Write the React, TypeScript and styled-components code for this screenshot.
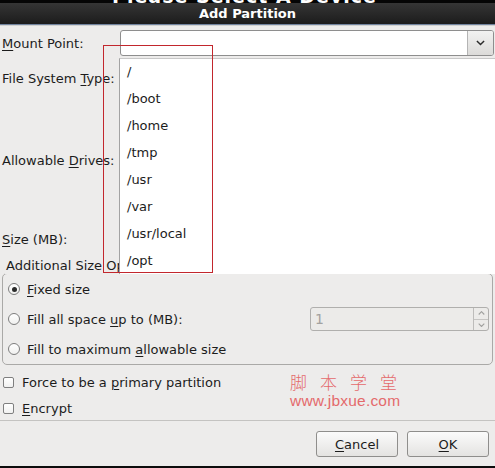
import React from "react";
import styled, { createGlobalStyle } from "styled-components";

const GlobalStyle = createGlobalStyle`
  html, body {
    margin: 0;
    padding: 0;
    background: #edeceb;
  }
  body {
    font-family: "DejaVu Sans", "Noto Sans", sans-serif;
    font-size: 13px;
    color: #1c1c1c;
  }
`;

const Window = styled.div`
  position: relative;
  width: 495px;
  height: 468px;
  overflow: hidden;
  display: flex;
  flex-direction: column;
  background: #edeceb;
  & > * {
    flex-shrink: 0;
  }
`;

const TopStrip = styled.div`
  height: 3px;
  overflow: hidden;
  background: #050505;
  display: flex;
  justify-content: center;
`;

const BehindText = styled.span`
  margin-top: -12px;
  font-size: 19px;
  font-weight: bold;
  line-height: 17px;
  color: #fff;
  letter-spacing: 1px;
  padding-right: 6px;
`;

const TitleBar = styled.div`
  height: 21px;
  display: flex;
  align-items: center;
  justify-content: center;
  background: linear-gradient(#353535, #262626 60%, #1c1c1c);
  color: #fff;
  font-weight: bold;
  font-size: 13px;
  border-bottom: 1px solid #71839e;
  box-shadow: 0 1px 0 #d0d0cf;
  margin-bottom: 1px;
`;

const Body = styled.div`
  height: 394px;
  display: flex;
  flex-direction: column;
  padding-top: 2px;
  box-sizing: border-box;
`;

const FormGrid = styled.div`
  display: grid;
  grid-template-columns: 120px 1fr;
  grid-template-rows: 30px 40px 124px 34px;
  padding-right: 1px;
  padding-bottom: 16px;
`;

const Label = styled.div`
  display: flex;
  align-items: center;
  padding-left: 2px;
  white-space: nowrap;
`;

const Mn = styled.u`
  text-decoration-thickness: 1px;
  text-underline-offset: 2px;
`;

const Combo = styled.div`
  margin-top: 2px;
  height: 26px;
  box-sizing: border-box;
  display: flex;
  border: 1px solid #8e8e8e;
  border-radius: 3px;
  background: #fff;
  overflow: hidden;
`;

const ComboEntry = styled.div`
  flex: 1;
`;

const ComboButton = styled.div`
  width: 25px;
  display: flex;
  align-items: center;
  justify-content: center;
  border-left: 1px solid #b4b4b4;
  background: linear-gradient(#f2f2f1, #dcdbd9);
`;

const SizeFrame = styled.fieldset`
  margin: 0 2px 0 2px;
  padding: 0;
  border: 1px solid #aaa9a7;
  border-radius: 5px;
  min-width: 0;
`;

const Legend = styled.legend`
  margin-left: 2px;
  padding: 0 1px;
  line-height: 2px;
  position: relative;
  top: -7px;
`;

const OptionRow = styled.div`
  height: 30px;
  display: flex;
  align-items: center;
  padding-left: 5px;
  padding-right: 3px;
`;

const Radio = styled.span<{ $checked?: boolean }>`
  width: 12px;
  height: 12px;
  box-sizing: border-box;
  border-radius: 50%;
  border: 1px solid #7d7d7d;
  background: linear-gradient(#ffffff, #f0f0ef);
  margin-right: 7px;
  display: flex;
  align-items: center;
  justify-content: center;
  &::after {
    content: "";
    display: ${(p) => (p.$checked ? "block" : "none")};
    width: 5px;
    height: 5px;
    border-radius: 50%;
    background: #2a2a2a;
  }
`;

const Grow = styled.div`
  flex: 1;
`;

const SpinBox = styled.div`
  width: 179px;
  height: 24px;
  box-sizing: border-box;
  display: flex;
  border: 1px solid #b0afad;
  border-radius: 3px;
  background: #ecebe9;
  color: #a3a2a0;
  font-size: 14px;
`;

const SpinValue = styled.div`
  flex: 1;
  display: flex;
  align-items: center;
  padding-left: 4px;
`;

const SpinButtons = styled.div`
  width: 14px;
  display: flex;
  flex-direction: column;
  border-left: 1px solid #bdbcba;
`;

const SpinStep = styled.div<{ $first?: boolean }>`
  flex: 1;
  display: flex;
  align-items: center;
  justify-content: center;
  border-bottom: ${(p) => (p.$first ? "1px solid #c6c5c3" : "none")};
`;

const CheckList = styled.div`
  display: flex;
  flex-direction: column;
  margin-top: 4px;
`;

const CheckRow = styled.div`
  height: 26px;
  display: flex;
  align-items: center;
  padding-left: 3px;
`;

const Box = styled.span`
  width: 11px;
  height: 11px;
  box-sizing: border-box;
  border: 1px solid #7f7f7f;
  border-radius: 2px;
  background: linear-gradient(#ffffff, #f1f1f0);
  margin-right: 8px;
`;

const Separator = styled.div`
  height: 1px;
  background: #c4c3c1;
`;

const Footer = styled.div`
  height: 45px;
  display: flex;
  align-items: center;
  justify-content: flex-end;
  gap: 9px;
  padding-right: 6px;
  box-sizing: border-box;
`;

const Button = styled.div`
  width: 82px;
  height: 26px;
  box-sizing: border-box;
  display: flex;
  align-items: center;
  justify-content: center;
  border: 1px solid #8f8e8c;
  border-radius: 3px;
  background: linear-gradient(#fbfbfb, #e4e3e1);
  margin-top: 1px;
`;

const BottomEdge = styled.div`
  height: 2px;
  background: #0c0c0c;
`;

const DropList = styled.ul`
  position: absolute;
  left: 119px;
  top: 58px;
  right: 0;
  height: 216px;
  margin: 0;
  padding: 0;
  list-style: none;
  background: #fff;
  border-left: 1px solid #a3a3a3;
  border-top: 1px solid #c8c8c8;
  box-sizing: border-box;
`;

const DropItem = styled.li`
  height: 27px;
  display: flex;
  align-items: center;
  padding-left: 7px;
  padding-bottom: 2px;
  box-sizing: border-box;
  font-size: 13px;
`;

const Annotation = styled.div`
  position: absolute;
  left: 103px;
  top: 45px;
  width: 110px;
  height: 228px;
  border: 1px solid #c2272d;
  box-sizing: border-box;
  pointer-events: none;
`;

const Watermark = styled.div`
  position: absolute;
  left: 290px;
  top: 372px;
  color: #e46a6c;
  display: flex;
  flex-direction: column;
  align-items: flex-start;
`;

const WatermarkCn = styled.span`
  font-family: "Noto Sans CJK SC", sans-serif;
  font-size: 17px;
  line-height: 20px;
  letter-spacing: 13px;
  font-weight: 300;
`;

const WatermarkUrl = styled.span`
  font-family: "Liberation Sans", Arial, sans-serif;
  font-size: 15.5px;
  line-height: 15px;
  margin-top: 1px;
  letter-spacing: 0.2px;
`;

const mountPoints = [
  "/",
  "/boot",
  "/home",
  "/tmp",
  "/usr",
  "/var",
  "/usr/local",
  "/opt",
];

const Chevron = ({ up, size = 9, color = "#2b2b2b" }: { up?: boolean; size?: number; color?: string }) => (
  <svg width={size} height={size * 0.6} viewBox="0 0 10 6">
    <path
      d={up ? "M1 5 L5 1 L9 5" : "M1 1 L5 5 L9 1"}
      fill="none"
      stroke={color}
      strokeWidth={1.6}
    />
  </svg>
);

export default function App() {
  return (
    <>
      <GlobalStyle />
      <Window>
        <TopStrip>
          <BehindText>Please Select A Device</BehindText>
        </TopStrip>
        <TitleBar>Add Partition</TitleBar>
        <Body>
          <FormGrid>
            <Label>
              <span>
                <Mn>M</Mn>ount Point:
              </span>
            </Label>
            <Combo>
              <ComboEntry />
              <ComboButton>
                <Chevron />
              </ComboButton>
            </Combo>
            <Label>
              <span>
                File System <Mn>T</Mn>ype:
              </span>
            </Label>
            <div />
            <Label>
              <span>
                Allowable <Mn>D</Mn>rives:
              </span>
            </Label>
            <div />
            <Label>
              <span>
                <Mn>S</Mn>ize (MB):
              </span>
            </Label>
            <div />
          </FormGrid>

          <SizeFrame>
            <Legend>Additional Size Options</Legend>
            <OptionRow>
              <Radio $checked />
              <span>
                <Mn>F</Mn>ixed size
              </span>
            </OptionRow>
            <OptionRow>
              <Radio />
              <span>
                Fill all space <Mn>u</Mn>p to (MB):
              </span>
              <Grow />
              <SpinBox>
                <SpinValue>1</SpinValue>
                <SpinButtons>
                  <SpinStep $first>
                    <Chevron up size={7} color="#a0a09e" />
                  </SpinStep>
                  <SpinStep>
                    <Chevron size={7} color="#a0a09e" />
                  </SpinStep>
                </SpinButtons>
              </SpinBox>
            </OptionRow>
            <OptionRow>
              <Radio />
              <span>
                Fill to maximum <Mn>a</Mn>llowable size
              </span>
            </OptionRow>
          </SizeFrame>

          <CheckList>
            <CheckRow>
              <Box />
              <span>
                Force to be a <Mn>p</Mn>rimary partition
              </span>
            </CheckRow>
            <CheckRow>
              <Box />
              <span>
                <Mn>E</Mn>ncrypt
              </span>
            </CheckRow>
          </CheckList>
        </Body>
        <Separator />
        <Footer>
          <Button>
            <span>
              <Mn>C</Mn>ancel
            </span>
          </Button>
          <Button>
            <span>
              <Mn>O</Mn>K
            </span>
          </Button>
        </Footer>
        <BottomEdge />

        <DropList>
          {mountPoints.map((mp) => (
            <DropItem key={mp}>{mp}</DropItem>
          ))}
        </DropList>
        <Annotation />
        <Watermark>
          <WatermarkCn>脚本学堂</WatermarkCn>
          <WatermarkUrl>www.jbxue.com</WatermarkUrl>
        </Watermark>
      </Window>
    </>
  );
}
